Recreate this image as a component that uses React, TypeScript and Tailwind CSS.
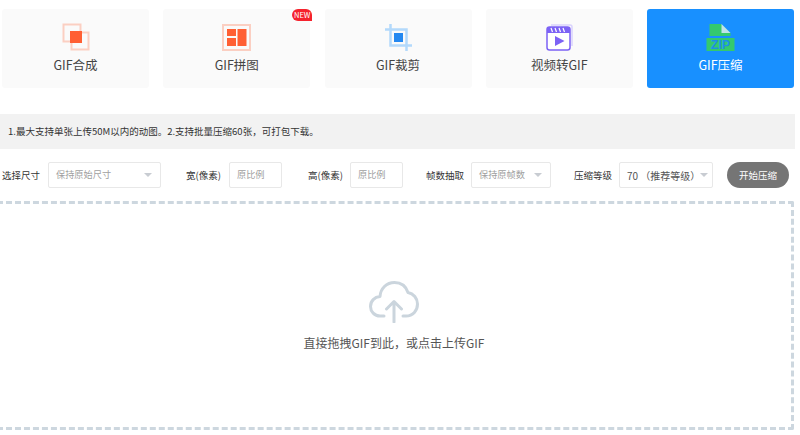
const font = 'font-["Noto_Sans_CJK_SC",sans-serif]';

function MergeIcon() {
  return (
    <svg width="28" height="28" viewBox="0 0 28 28">
      <rect x="1.5" y="1.5" width="17" height="17" fill="none" stroke="#fbcfc2" strokeWidth="2" />
      <rect x="9.5" y="9.5" width="17" height="17" fill="none" stroke="#fbcfc2" strokeWidth="2" />
      <rect x="8" y="8" width="12" height="12" fill="#ff5f33" />
    </svg>
  );
}

function CollageIcon() {
  return (
    <svg width="29" height="27" viewBox="0 0 29 27">
      <rect x="1" y="1" width="27" height="25" fill="none" stroke="#fbcfc2" strokeWidth="2" />
      <rect x="5" y="5" width="9" height="7" fill="#ff5f33" />
      <rect x="5" y="14" width="9" height="8" fill="#ff5f33" />
      <rect x="15.500" y="5" width="9" height="17" fill="#ff5f33" />
    </svg>
  );
}

function CropIcon() {
  return (
    <svg width="27" height="27" viewBox="0 0 27 27">
      <path d="M0 5.500H21.500V27M5.500 0V21.500H27" fill="none" stroke="#b3d9fb" strokeWidth="2.500" />
      <rect x="9" y="9" width="9" height="9" fill="#2488f0" />
    </svg>
  );
}

function VideoIcon() {
  return (
    <svg width="27" height="27" viewBox="0 0 27 27">
      <path d="M5 1H24Q26 1 26 3V22" fill="none" stroke="#d9d2fd" strokeWidth="1.500" />
      <rect x="1" y="3" width="23" height="23" rx="2.500" fill="#fff" stroke="#7c62f5" strokeWidth="1.500" />
      <rect x="1" y="3" width="23" height="6" fill="#7c62f5" />
      <path d="M5 4L6.500 8M9 4L10.500 8M13 4L14.500 8M17 4L18.500 8" stroke="#fff" strokeWidth="1.200" />
      <path d="M9 12L18.500 17L9 22Z" fill="#7c62f5" />
    </svg>
  );
}

function ZipIcon() {
  return (
    <svg width="29" height="27" viewBox="0 0 29 27">
      <path d="M3.500 0H15L24.500 9V12H3.500Z" fill="#34c96e" />
      <path d="M15.500 0L24.500 9H15.500Z" fill="#bfe3ea" />
      <rect x="0.500" y="14" width="28" height="13" fill="#34c96e" />
      <text x="14.500" y="25" textAnchor="middle" fontSize="12.500" fontWeight="700" fill="#1f8fe8" fontFamily="Liberation Sans">ZIP</text>
    </svg>
  );
}

function Caret() {
  return <span className="h-0 w-0 border-x-[4px] border-t-[4px] border-x-transparent border-t-[#c8ccd2]" />;
}

function Card({ icon, label, active, isNew }: { icon: React.ReactNode; label: string; active?: boolean; isNew?: boolean }) {
  return (
    <div className={`relative flex h-[79px] w-[147px] flex-col items-center rounded-[3px] pt-[14px] ${active ? 'bg-[#1890ff] text-white' : 'bg-[#fafafa] text-[#444]'}`}>
      <div className="flex h-[28px] items-center justify-center">{icon}</div>
      <div className="mt-[2px] text-[12.5px] leading-[24px]">{label}</div>
      {isNew && (
        <span className="absolute right-[-2px] top-0 flex h-[12px] w-[20px] items-center justify-center rounded-l-full rounded-tr-full bg-[#f5222d] text-[7.5px] text-white">NEW</span>
      )}
    </div>
  );
}

function Label({ children, className }: { children: React.ReactNode; className: string }) {
  return <span className={`text-[9.5px] text-[#333] ${className}`}>{children}</span>;
}

function Select({ value, width, dark }: { value: string; width: string; dark?: boolean }) {
  return (
    <div className={`flex h-[26px] items-center justify-between rounded-[2px] border border-[#e8e8e8] pl-[7px] ${width} ${dark ? 'pr-[6px] text-[10px] text-[#555]' : 'pr-[8px] text-[9.2px] text-[#a0a0a0]'}`}>
      <span className="whitespace-nowrap">{value}</span>
      <Caret />
    </div>
  );
}

function SizeInput() {
  return (
    <div className="flex h-[26px] w-[53px] items-center rounded-[2px] border border-[#e8e8e8] pl-[7px] text-[9.2px] text-[#a0a0a0]">原比例</div>
  );
}

export default function App() {
  return (
    <div className={`h-[435px] w-[800px] overflow-hidden bg-white ${font}`}>
      <div className="flex gap-[14.25px] pl-[2px] pt-[9px]">
        <Card icon={<MergeIcon />} label="GIF合成" />
        <Card icon={<CollageIcon />} label="GIF拼图" isNew />
        <Card icon={<CropIcon />} label="GIF裁剪" />
        <Card icon={<VideoIcon />} label="视频转GIF" />
        <Card icon={<ZipIcon />} label="GIF压缩" active />
      </div>

      <div className="mt-[26px] flex h-[35px] w-[795px] items-center bg-[#f2f2f2] pl-[8px] text-[9.5px] text-[#333]">
        1.最大支持单张上传50M以内的动图。2.支持批量压缩60张，可打包下载。
      </div>

      <div className="mt-[13px] flex h-[26px] items-center pl-[2px]">
        <Label className="w-[46px]">选择尺寸</Label>
        <Select value="保持原始尺寸" width="w-[113px]" />
        <Label className="ml-[25px] w-[43px]">宽(像素)</Label>
        <SizeInput />
        <Label className="ml-[26px] w-[42px]">高(像素)</Label>
        <SizeInput />
        <Label className="ml-[23px] w-[45px]">帧数抽取</Label>
        <Select value="保持原帧数" width="w-[80px]" />
        <Label className="ml-[23px] w-[45px]">压缩等级</Label>
        <Select value="70 （推荐等级）" width="w-[94px]" dark />
        <button className="ml-[14px] h-[26px] w-[62px] rounded-full bg-[#757575] text-[9.5px] text-white">开始压缩</button>
      </div>

      <div className="ml-[-3px] mt-[13px] flex h-[229px] w-[797px] flex-col items-center rounded-[2px] border-[3px] border-dashed border-[#cdd7df] pr-[3px] pt-[77px]">
        <svg width="50" height="42" viewBox="0 0 50 42" fill="none" stroke="#cbd5dd" strokeWidth="3" strokeLinecap="round" strokeLinejoin="round">
          <path d="M15 35H11C5.500 35 1.500 30.500 1.500 25.500C1.500 20 5.500 16 11 15.500C11.500 7.500 17.500 1.500 25.500 1.500C32 1.500 37 5.500 39 11.500C44.500 12.500 48.500 17.500 48.500 23C48.500 29.500 44 35 37 35H34" />
          <path d="M25 41V21M17.500 28L25 20.500L32.500 28" />
        </svg>
        <div className="mt-[11px] text-[12px] leading-[18px] text-[#555]">直接拖拽GIF到此，或点击上传GIF</div>
      </div>
    </div>
  );
}
